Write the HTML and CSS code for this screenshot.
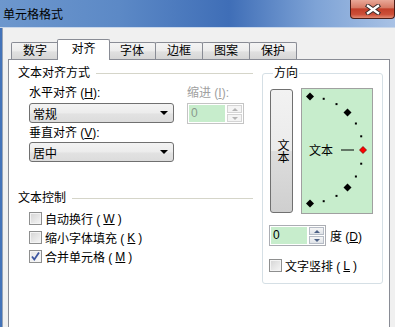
FILE: index.html
```html
<!DOCTYPE html>
<html lang="zh-CN">
<head>
  <meta charset="UTF-8">
  <title>单元格格式</title>
  <link rel="stylesheet" href="styles.css">
</head>
<body>
  <div class="window">
    <div class="titlebar">
      <span class="title">单元格格式</span>
      <div class="close">
        <svg width="16" height="11" viewBox="0 0 16 11">
          <path d="M3 2 L13 9 M13 2 L3 9" stroke="#3a2a2a" stroke-width="4.4" stroke-linecap="square"/>
          <path d="M3 2 L13 9 M13 2 L3 9" stroke="#ffffff" stroke-width="2.4" stroke-linecap="square"/>
        </svg>
      </div>
    </div>
    <div class="frame">
      <div class="tabs">
        <div class="tab">数字</div>
        <div class="tab active">对齐</div>
        <div class="tab">字体</div>
        <div class="tab">边框</div>
        <div class="tab">图案</div>
        <div class="tab">保护</div>
      </div>
      <div class="panel">
        <div class="left">
          <div class="group-title"><span>文本对齐方式</span><i class="rule"></i></div>
          <div class="align-row">
            <div class="align-col">
              <div class="label first">水平对齐 (<u>H</u>):</div>
              <div class="select">常规<span class="arrow"></span></div>
              <div class="label">垂直对齐 (<u>V</u>):</div>
              <div class="select second">居中<span class="arrow"></span></div>
            </div>
            <div class="indent-col">
              <div class="label first disabled">缩进 (<u>I</u>):</div>
              <div class="spin disabled">
                <span class="field">0</span>
                <span class="spin-btns"><i class="up"></i><i class="down"></i></span>
              </div>
            </div>
          </div>
          <div class="group-title control"><span>文本控制</span><i class="rule"></i></div>
          <div class="checks">
            <div class="check-row"><span class="box"></span>自动换行 (<u>W</u>)</div>
            <div class="check-row"><span class="box"></span>缩小字体填充 (<u>K</u>)</div>
            <div class="check-row"><span class="box checked">
              <svg width="11" height="11" viewBox="0 0 11 11"><path d="M2 5.5 L4.3 8.5 L9 1.5" fill="none" stroke="#3b55a0" stroke-width="1.8"/></svg>
            </span>合并单元格 (<u>M</u>)</div>
          </div>
        </div>
        <fieldset class="orient">
          <legend>方向</legend>
          <div class="orient-top">
            <div class="vbutton">文本</div>
            <div class="dial">
              <svg width="70" height="124" viewBox="0 0 70 124">
                <g fill="#000">
                  <path d="M8 3.5 L12 7.5 L8 11.5 L4 7.5 Z"/>
                  <path d="M45.5 19.5 L49.5 23.5 L45.5 27.5 L41.5 23.5 Z"/>
                  <path d="M45.5 94.5 L49.5 98.5 L45.5 102.5 L41.5 98.5 Z"/>
                  <path d="M8 110.5 L12 114.5 L8 118.5 L4 114.5 Z"/>
                  <rect x="20.7" y="8.8" width="2" height="2"/>
                  <rect x="33.5" y="14.1" width="2" height="2"/>
                  <rect x="52.9" y="33.5" width="2" height="2"/>
                  <rect x="58.2" y="46.3" width="2" height="2"/>
                  <rect x="58.2" y="73.7" width="2" height="2"/>
                  <rect x="52.9" y="86.5" width="2" height="2"/>
                  <rect x="33.5" y="105.9" width="2" height="2"/>
                  <rect x="20.7" y="111.2" width="2" height="2"/>
                  <rect x="39" y="60.5" width="13" height="1"/>
                </g>
                <path d="M61 57.5 L64.5 61 L61 64.5 L57.5 61 Z" fill="#ff0000" stroke="#700" stroke-width="0.7"/>
                <text x="7" y="66" class="dial-text">文本</text>
              </svg>
            </div>
          </div>
          <div class="degree-row">
            <div class="spin">
              <span class="field">0</span>
              <span class="spin-btns"><i class="up"></i><i class="down"></i></span>
            </div>
            <span class="degree-label">度 (<u>D</u>)</span>
          </div>
          <div class="check-row vertical"><span class="box"></span>文字竖排 (<u>L</u>)</div>
        </fieldset>
      </div>
    </div>
  </div>
</body>
</html>
```

FILE: styles.css
```css
* {
  box-sizing: border-box;
}

body {
  margin: 0;
  font-family: "Liberation Sans", "Noto Sans CJK SC", sans-serif;
  font-size: 12px;
  color: #000;
  background: #f0f0f0;
}

u {
  text-decoration: underline;
}

.window {
  width: 395px;
  height: 327px;
  overflow: hidden;
  display: flex;
  flex-direction: column;
}

.titlebar {
  height: 28px;
  flex: none;
  display: flex;
  align-items: flex-start;
  background: linear-gradient(to right, #6d97cd 0%, #5c89c6 30%, #3f6eb7 58%, #7ea3d6 80%, #a9c2e5 100%);
  border-bottom: 1px solid #c9d7ea;
}

.title {
  margin: 8px 0 0 3px;
  line-height: 14px;
}

.close {
  margin-left: auto;
  width: 45px;
  height: 19px;
  display: flex;
  align-items: center;
  justify-content: center;
  border: 1px solid #4b1d18;
  border-top: none;
  border-radius: 0 0 4px 4px;
  background: linear-gradient(#e9a898 0%, #d77b66 42%, #c23f2a 50%, #cc4f39 80%, #e28a73 100%);
}

.frame {
  flex: 1;
  display: flex;
  flex-direction: column;
  border-left: 2px solid #4373b9;
  padding-left: 6px;
  box-shadow: inset 1px 0 0 #98a4b6;
  background: #f0f0f0;
}

.tabs {
  height: 31px;
  flex: none;
  display: flex;
  align-items: flex-end;
  padding-left: 3px;
  position: relative;
  z-index: 1;
}

.tab {
  width: 48px;
  height: 17px;
  margin-right: -1px;
  border: 1px solid #898c95;
  border-bottom: none;
  border-radius: 2px 2px 0 0;
  background: linear-gradient(#f4f4f4, #ececec 50%, #e0e0e0 55%, #d6d6d6);
  text-align: center;
  line-height: 16px;
}

.tab.active {
  width: 53px;
  height: 21px;
  margin: 0 -2px -1px -1px;
  background: #fff;
  line-height: 19px;
  position: relative;
}

.panel {
  width: 382px;
  flex: 1;
  display: flex;
  background: #fff;
  border: 1px solid #898c95;
  border-bottom: none;
}

.left {
  width: 244px;
  padding-left: 9px;
  display: flex;
  flex-direction: column;
}

.group-title {
  display: flex;
  align-items: center;
  margin-top: 6px;
  line-height: 14px;
}

.group-title.control {
  margin-top: 29px;
}

.rule {
  flex: 1;
  height: 1px;
  margin: 1px 0 0 6px;
  background: #d5d5c9;
}

.align-row {
  display: flex;
}

.align-col {
  width: 145px;
  margin-left: 11px;
  display: flex;
  flex-direction: column;
}

.indent-col {
  width: 58px;
  margin-left: 13px;
  display: flex;
  flex-direction: column;
}

.label {
  line-height: 14px;
  margin-top: 3px;
}

.label.first {
  margin-top: 6px;
}

.disabled {
  color: #a0a0a0;
}

.select {
  height: 20px;
  margin-top: 3px;
  padding-left: 3px;
  display: flex;
  align-items: center;
  border: 1px solid #707070;
  border-radius: 3px;
  background: linear-gradient(#f3f3f3, #ececec 50%, #e2e2e2 55%, #dcdcdc);
}

.select.second {
  margin-top: 2px;
}

.arrow {
  margin-left: auto;
  margin-right: 5px;
  width: 0;
  height: 0;
  border-left: 4px solid transparent;
  border-right: 4px solid transparent;
  border-top: 4px solid #000;
}

.spin {
  width: 57px;
  height: 21px;
  margin-top: 3px;
  display: flex;
  border: 1px solid #abadb3;
  padding: 1px;
  background: #fff;
}

.spin.disabled {
  border-color: #c4c4c4;
}

.field {
  flex: 1;
  background: #c7edcc;
  padding-left: 2px;
  line-height: 17px;
  color: #000;
}

.spin.disabled .field {
  color: #8a9a8c;
}

.spin-btns {
  width: 15px;
  margin-left: 2px;
  display: flex;
  flex-direction: column;
  gap: 1px;
}

.spin-btns i {
  flex: 1;
  display: flex;
  align-items: center;
  justify-content: center;
  border: 1px solid #b6bcc6;
  background: linear-gradient(#f6f6f6, #dfe3e8);
}

.spin-btns i::after {
  content: "";
  width: 0;
  height: 0;
  border-left: 3px solid transparent;
  border-right: 3px solid transparent;
}

.spin-btns .up::after {
  border-bottom: 3px solid #4d6185;
}

.spin-btns .down::after {
  border-top: 3px solid #4d6185;
}

.spin.disabled .spin-btns i {
  border-color: #d4d4d4;
  background: #f4f4f4;
}

.spin.disabled .up::after {
  border-bottom-color: #b4b4b4;
}

.spin.disabled .down::after {
  border-top-color: #b4b4b4;
}

.checks {
  margin: 4px 0 0 11px;
  display: flex;
  flex-direction: column;
}

.check-row {
  height: 19px;
  display: flex;
  align-items: center;
  gap: 3px;
}

.box {
  width: 13px;
  height: 13px;
  flex: none;
  border: 1px solid #8e8f8f;
  display: flex;
  align-items: center;
  justify-content: center;
  background: linear-gradient(135deg, #d4d4d4, #f6f6f6);
  box-shadow: inset 0 0 0 1px #f4f4f4;
}

.box.checked {
  background: linear-gradient(135deg, #e4e4e4, #fbfbfb);
}

.orient {
  width: 121px;
  margin: 6px 0 0 9px;
  height: 218px;
  padding: 8px 0 0 7px;
  border: 1px solid #d5dfe5;
  border-radius: 3px;
  min-width: 0;
}

.orient legend {
  padding: 0 1px;
  margin-left: 3px;
  line-height: 14px;
}

.orient-top {
  display: flex;
  align-items: flex-start;
}

.vbutton {
  width: 23px;
  height: 124px;
  margin-top: 1px;
  border: 1px solid #707070;
  border-radius: 3px;
  background: linear-gradient(#f2f2f2, #ebebeb 50%, #dddddd 50%, #cfcfcf);
  writing-mode: vertical-rl;
  display: flex;
  align-items: center;
  justify-content: center;
  line-height: 21px;
}

.dial {
  width: 72px;
  height: 126px;
  margin-left: 8px;
  border: 1px solid #a0a0a0;
  background: #c7edcc;
}

.dial svg {
  display: block;
}

.dial-text {
  font-family: "Noto Sans CJK SC", sans-serif;
  font-size: 12px;
  fill: #000;
}

.degree-row {
  display: flex;
  align-items: center;
  margin: 11px 0 0 -1px;
}

.degree-row .spin {
  margin-top: 0;
}

.degree-label {
  margin-left: 4px;
}

.check-row.vertical {
  margin: 10px 0 0 -1px;
}
```
